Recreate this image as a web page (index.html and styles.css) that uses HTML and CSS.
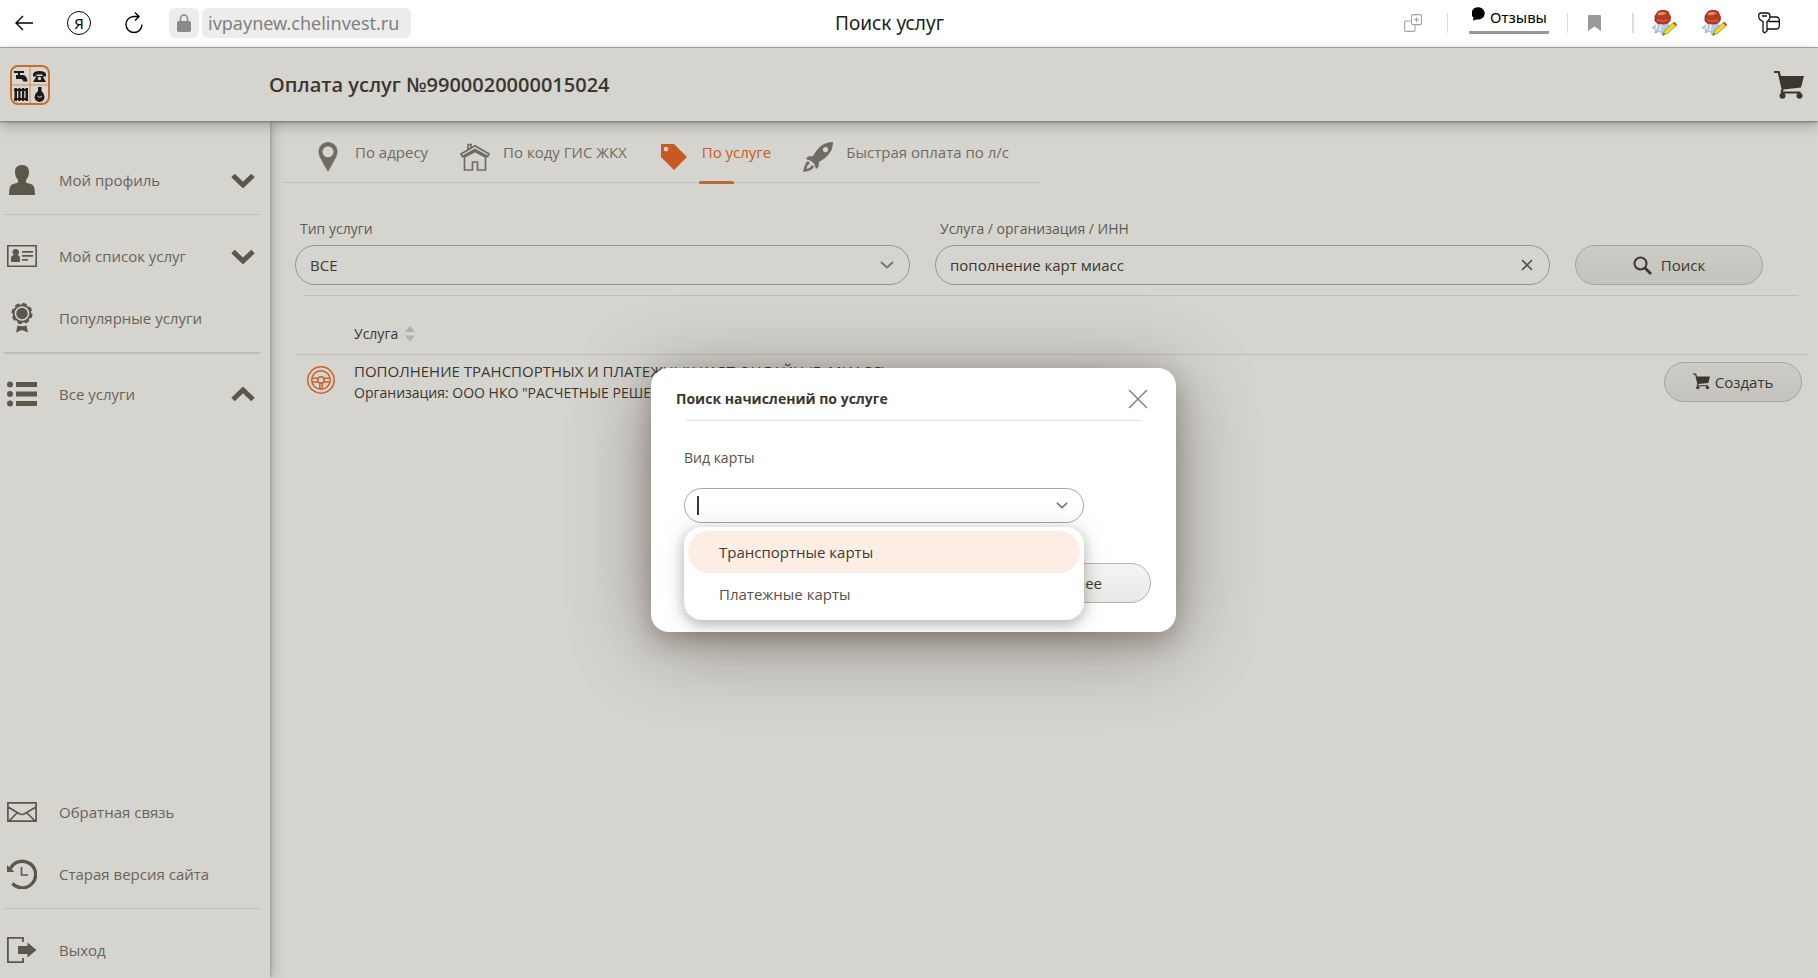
FILE: index.html
```html
<!DOCTYPE html>
<html lang="ru">
<head>
<meta charset="utf-8">
<title>Поиск услуг</title>
<link rel="stylesheet" href="styles.css">
</head>
<body>
<svg class="defs" aria-hidden="true">
  <symbol id="cart" viewBox="0 0 30 28"><path d="M0 0H5.500L7 5H30L27 16.500L9.500 18.500L9 20.500H26.500V22.500H7.500L6.500 20.500L7.500 18L3.800 2H0Z"/><circle cx="8.500" cy="24.800" r="3"/><circle cx="25.500" cy="24.800" r="3"/></symbol>
  <symbol id="chev" viewBox="0 0 24 15"><path d="M2 2.500L12 12L22 2.500" fill="none" stroke="currentColor" stroke-width="5"/></symbol>
  <symbol id="thin-chev" viewBox="0 0 14 8"><path d="M1 1L7 6.500L13 1" fill="none" stroke="currentColor" stroke-width="1.800"/></symbol>
  <symbol id="seal" viewBox="0 0 25 26">
    <path d="M6 13L0 18L4 19L3 23L8 21L11 26L13 20L19 18L15 12Z" fill="#b9cbe0" stroke="#8fa3bd" stroke-width=".7"/>
    <path d="M5 14L4 19M9 14L8 21" stroke="#eef4fb" stroke-width="1.500"/>
    <path d="M6 1.500Q11 -1 16 1.500L18.500 7L18 11L15 13.500L11 14L6 13.500L3 11L3 6Z" fill="#b83a22" stroke="#8f2312" stroke-width=".8"/>
    <path d="M6 3Q10 1 15 3Q11 6 6 5Z" fill="#e58a6e"/><path d="M5 10Q11 12.500 16 10" fill="none" stroke="#d9745a" stroke-width="1"/>
    <path d="M11 25L12.500 20.500L21.500 12.500L24.500 15.500L15.500 23.500Z" fill="#e8d631" stroke="#9a8b1c" stroke-width=".7"/>
    <path d="M20.800 13L22.500 11.800L25 14.500L23.700 16Z" fill="#d8402c"/><path d="M11 25L11.700 23L13 24.300Z" fill="#333"/>
  </symbol>
</svg>

<div class="browser">
  <div class="browser-left">
    <button class="ico-btn" aria-label="Назад"><svg width="18" height="16" viewBox="0 0 18 16" class="line"><path d="M18 8H1M8 1L1 8L8 15"/></svg></button>
    <button class="ico-btn ya" aria-label="Яндекс">Я</button>
    <button class="ico-btn" aria-label="Обновить"><svg width="18" height="22" viewBox="0 0 18 22" class="line"><path d="M17 12.500A8 8 0 1 1 9 4.500H14M10 .5L14 4.500L10 8.500"/></svg></button>
    <div class="address">
      <span class="lock"><svg width="14" height="18" viewBox="0 0 14 18"><path d="M3.500 8V4.500A3.500 3.500 0 0 1 10.500 4.500V8" fill="none" stroke="#8a8a8a" stroke-width="1.600"/><rect y="7" width="14" height="11" rx="2" fill="#8a8a8a"/></svg></span>
      <span class="url">ivpaynew.chelinvest.ru</span>
    </div>
  </div>
  <div class="page-title">Поиск услуг</div>
  <div class="browser-right">
    <svg width="18" height="18" viewBox="0 0 18 18" fill="none" stroke="#a3a3a3" stroke-width="1.100"><rect x="7.500" y=".6" width="10" height="10" rx="1.500"/><path d="M12.500 3.200V8M10.100 5.600H14.900M7.500 7H2Q.6 7 .6 8.500V16Q.6 17.400 2 17.400H9.500Q11 17.400 11 16V10.600"/></svg>
    <span class="sep sep-a"></span>
    <a class="reviews" href="#"><svg width="14" height="14" viewBox="0 0 14 14"><path d="M7 .3A6.600 6 0 1 1 5 12.400L1 13.500L1.500 10.500A6.600 6 0 0 1 7 .3Z"/></svg>Отзывы</a>
    <span class="sep sep-b"></span>
    <svg width="13" height="16" viewBox="0 0 13 16" fill="#999"><path d="M1 0H12Q13 0 13 1V16L6.500 11.500L0 16V1Q0 0 1 0Z"/></svg>
    <span class="sep sep-c"></span>
    <svg class="seal" width="25" height="26"><use href="#seal"/></svg>
    <svg class="seal" width="25" height="26"><use href="#seal"/></svg>
    <svg width="22" height="22" viewBox="0 0 22 22" fill="none" stroke="#111" stroke-width="1.300"><path d="M3 1H9Q12 1 12 4Q12 8 9 9.500V19L6.500 21L5 19.500V9.500Q.7 8 .7 4Q.7 1 3 1ZM4 4H9M12.500 5H18Q21.300 5 21.300 8V14Q21.300 17 18 17H9.500M10.500 9.500H21"/></svg>
  </div>
</div>

<header class="header">
  <svg class="logo" width="40" height="40" viewBox="0 0 40 40">
    <rect x="1" y="1" width="38" height="38" rx="7" fill="#d9d6cf" stroke="#c66f2a" stroke-width="2"/>
    <path d="M20 2V38M2 20H38" stroke="#cd8d5c" stroke-width="1"/>
    <g fill="#1d1b17"><path d="M4 6H14V8H10V10H13Q17 10.500 17.500 16.500H13.500Q13 14 11 14H6V10H8V8H4Z"/>
    <path d="M23 9Q24 6 29.500 6Q35 6 36 9V11.500H32.500V9.500H26.500V11.500H23ZM26.500 11H32.500L36 17H23Z"/><circle cx="29.500" cy="13.500" r="1.700" fill="#d9d6cf"/>
    <path d="M4 24H18V26H4ZM4 33H18V35H4Z"/><path d="M4.500 23H7V36H4.500ZM8.300 23H10.500V36H8.300ZM12 23H14.200V36H12ZM15.500 23H18V36H15.500Z"/>
    <path d="M28 22H31.500V26Q34.500 29 34.500 32A5 5 0 0 1 24.500 32Q24.500 29 28 26Z"/></g><path d="M27.500 31Q30 34 32 31" stroke="#d9d6cf" fill="none"/>
  </svg>
  <h1>Оплата услуг №9900020000015024</h1>
  <button class="plain cart-btn" aria-label="Корзина"><svg width="30" height="28"><use href="#cart"/></svg></button>
</header>

<div class="body">
  <nav class="sidebar">
    <a href="#" class="item"><svg width="30" height="30" viewBox="0 0 30 30"><path d="M15 0C20 0 22 3 22 7C22 11 20.500 13 19 15V17.500L25 19.500Q28 21 28 30H2Q2 21 5 19.500L11 17.500V15C9.500 13 8 11 8 7C8 3 10 0 15 0Z"/></svg><span>Мой профиль</span><svg class="arrow" width="24" height="15"><use href="#chev"/></svg></a>
    <hr>
    <a href="#" class="item"><svg width="30" height="30" viewBox="0 0 30 30"><path d="M.8 4.800H29.200V25.200H.8Z" fill="none" stroke="currentColor" stroke-width="1.600"/><path d="M4 21V17Q4 14.500 7 14A3.300 3.300 0 1 1 10.500 14Q13 14.500 13 17V21ZM15 10H26V11.800H15ZM15 14H26V15.800H15ZM15 18H21V19.800H15Z"/></svg><span>Мой список услуг</span><svg class="arrow" width="24" height="15"><use href="#chev"/></svg></a>
    <a href="#" class="item"><svg width="30" height="30" viewBox="0 0 30 30"><circle cx="15" cy="10.500" r="8.300" fill="none" stroke="currentColor" stroke-width="2"/><circle cx="15" cy="10.500" r="9.600" fill="none" stroke="currentColor" stroke-width="2" stroke-dasharray="4.500 3.040"/><circle cx="15" cy="10.500" r="5.700"/><path d="M10.500 22.500Q15 24 19.500 22.500L21 29.500L15 27L9 29.500Z"/></svg><span>Популярные услуги</span></a>
    <hr class="thick">
    <a href="#" class="item"><svg width="30" height="30" viewBox="0 0 30 30"><circle cx="3" cy="5.500" r="3"/><circle cx="3" cy="15" r="3"/><circle cx="3" cy="24.500" r="3"/><path d="M9 3H30V8H9ZM9 12.500H30V17.500H9ZM9 22H30V27H9Z"/></svg><span>Все услуги</span><svg class="arrow up" width="24" height="15"><use href="#chev"/></svg></a>
    <div class="bottom">
      <a href="#" class="item"><svg width="30" height="30" viewBox="0 0 30 30" ><path d="M.9 5.900H29.100V24.100H.9ZM1 10L12 16.500Q15 18.500 18 16.500L29 10M2 24L10.500 15.500M28 24L19.500 15.500" fill="none" stroke="currentColor" stroke-width="1.700"/></svg><span>Обратная связь</span></a>
      <a href="#" class="item"><svg width="30" height="30" viewBox="0 0 30 30"><path d="M3.500 9.500A13.300 13.300 0 1 1 5.500 24.500" fill="none" stroke="currentColor" stroke-width="3.400"/><path d="M0 6L7 12.500V13H0Z"/><path d="M14.500 8V16H21" fill="none" stroke="currentColor" stroke-width="1.600"/></svg><span>Старая версия сайта</span></a>
      <hr>
      <a href="#" class="item"><svg width="30" height="30" viewBox="0 0 30 30"><path d="M16 7V2.900H.9V27.100H16V23" fill="none" stroke="currentColor" stroke-width="1.800"/><path d="M11 11H20.500V7.500L29.500 15L20.500 22.500V19H11Z"/></svg><span>Выход</span></a>
    </div>
  </nav>

  <main class="main">
    <nav class="tabs">
      <a href="#" class="tab"><svg width="30" height="30" viewBox="0 0 30 30"><path fill-rule="evenodd" d="M15 0A9.500 9.500 0 0 1 24.500 9.500C24.500 15 19 22 15 30C11 22 5.500 15 5.500 9.500A9.500 9.500 0 0 1 15 0ZM15 4.300A5.500 5.500 0 1 0 15 15.300A5.500 5.500 0 0 0 15 4.300Z"/></svg><span>По адресу</span></a>
      <a href="#" class="tab"><svg width="30" height="30" viewBox="0 0 30 30" fill="none" stroke="currentColor" stroke-width="1.700"><path d="M1 12L15 3.800L29 12L27.500 14.500L15 7.500L2.500 14.500ZM4.500 15V28H12.500V20H17.500V28H25.500V15L15 9.500ZM8 7.500V2.500H11V5.500"/></svg><span>По коду ГИС ЖКХ</span></a>
      <a href="#" class="tab active"><svg width="30" height="30" viewBox="0 0 30 30"><path fill-rule="evenodd" d="M2 2H15L28 15L15 28L2 15ZM7 4.800A2.300 2.300 0 1 0 7 9.400A2.300 2.300 0 0 0 7 4.800Z"/></svg><span>По услуге</span></a>
      <a href="#" class="tab"><svg width="30" height="30" viewBox="0 0 30 30"><path fill-rule="evenodd" d="M30 0Q30 7 26 12Q23 16 16 20L15.500 25L13 27L11 21.500L8 19L3 17L5 14.500L10 14Q14 7 18 4Q23 0 30 0ZM22.500 5A2.600 2.600 0 1 0 22.500 10.200A2.600 2.600 0 0 0 22.500 5Z"/><path d="M5 19Q2 20 0 30Q9 29 11 25L9 23Q7.500 26 3.500 27Q4 23 7 21Z"/></svg><span>Быстрая оплата по л/с</span></a>
    </nav>

    <form class="filters">
      <div class="field">
        <label for="type">Тип услуги</label>
        <div class="control"><select id="type"><option>ВСЕ</option></select><svg class="caret" width="14" height="8"><use href="#thin-chev"/></svg></div>
      </div>
      <div class="field">
        <label for="query">Услуга / организация / ИНН</label>
        <div class="control"><input id="query" type="text" value="пополнение карт миасс"><button type="button" class="plain clear" aria-label="Очистить"><svg width="12" height="12" viewBox="0 0 12 12"><path d="M1 1L11 11M11 1L1 11" stroke="#55524b" stroke-width="1.600"/></svg></button></div>
      </div>
      <button type="button" class="pill"><svg width="19" height="19" viewBox="0 0 19 19" fill="none" stroke="currentColor"><circle cx="7.500" cy="7.500" r="6" stroke-width="2"/><path d="M12 12L18 18" stroke-width="2.800"/></svg>Поиск</button>
    </form>

    <div class="results-wrap">
    <table class="results">
      <thead><tr><th></th><th><div class="th">Услуга<svg width="10" height="16" viewBox="0 0 10 16" fill="#b0afaa"><path d="M5 0L10 6H0ZM0 9.500H10L5 15.500Z"/></svg></div></th><th></th></tr></thead>
      <tbody><tr>
        <td class="c-icon"><svg width="28" height="28" viewBox="0 0 28 28" fill="none" stroke="#c9622c" stroke-width="1.500"><circle cx="14" cy="14" r="13.200"/><circle cx="14" cy="14" r="9.300"/><circle cx="14" cy="14" r="3.200"/><path d="M5 12.300H11M17 12.300H23M5.500 16H11M17 16H22.500M12.800 17V23M15.200 17V23"/></svg></td>
        <td class="c-name"><div class="name">ПОПОЛНЕНИЕ ТРАНСПОРТНЫХ И ПЛАТЕЖНЫХ КАРТ ОНЛАЙН (Г. МИАСС)</div><div class="org">Организация: ООО НКО "РАСЧЕТНЫЕ РЕШЕНИЯ"</div></td>
        <td class="c-act"><button class="pill create"><svg width="17" height="17"><use href="#cart"/></svg>Создать</button></td>
      </tr></tbody>
    </table>
    </div>
  </main>
</div>

<div class="overlay">
  <section class="modal" role="dialog" aria-labelledby="dlg">
    <div class="modal-head"><h2 id="dlg">Поиск начислений по услуге</h2><button class="plain" aria-label="Закрыть"><svg width="20" height="20" viewBox="0 0 20 20"><path d="M1 1L19 19M19 1L1 19" stroke="#85827b" stroke-width="1.500"/></svg></button></div>
    <div class="modal-body">
      <label for="kind">Вид карты</label>
      <div class="combo">
        <input id="kind" type="text" role="combobox" aria-expanded="true" aria-controls="kinds">
        <span class="cursor"></span>
        <svg class="caret" width="12" height="7"><use href="#thin-chev"/></svg>
        <ul class="options" id="kinds" role="listbox">
          <li role="option" aria-selected="true" class="current">Транспортные карты</li>
          <li role="option">Платежные карты</li>
        </ul>
      </div>
    </div>
    <div class="modal-foot"><button class="pill light">Далее</button></div>
  </section>
</div>
</body>
</html>
```

FILE: styles.css
```css
* { box-sizing: border-box; }

body {
  margin: 0;
  height: 100vh;
  display: flex;
  flex-direction: column;
  overflow: hidden;
  background: #d5d4cf;
  color: #3b372e;
  fill: currentColor;
  font: 15px/20px "Open Sans", "Noto Sans", sans-serif;
}

button, input, select { font: inherit; color: inherit; }
a { color: inherit; text-decoration: none; }
h1, h2 { margin: 0; }
svg { display: block; flex: none; }
.defs { position: absolute; width: 0; height: 0; }
.plain { border: 0; background: none; padding: 0; cursor: pointer; }

/* browser bar */
.browser {
  display: grid;
  grid-template-columns: 1fr auto 1fr;
  align-items: center;
  height: 48px;
  flex: none;
  padding: 0 38px 2px 15px;
  background: #fff;
  border-bottom: 1px solid #adaca9;
  font-family: "Noto Sans", sans-serif;
  font-size: 19px;
  color: #222;
}
.browser-left, .browser-right, .address { display: flex; align-items: center; }
.browser-left { gap: 34px; }
.browser-right { justify-content: flex-end; }
.page-title { margin-right: 16px; }
.ico-btn { border: 0; background: none; padding: 0; }
.line { fill: none; stroke: #000; stroke-width: 1.4; }
.ya { width: 24px; height: 24px; border: 1px solid #000; border-radius: 50%; font-size: 15px; line-height: 20px; color: #000; }
.address { gap: 3px; margin-left: -8px; }
.lock, .url { background: #ececec; border-radius: 6px; height: 30px; }
.lock { width: 30px; display: grid; place-items: center; }
.url { padding: 0 12px 0 6px; font-size: 18px; line-height: 30px; color: #808080; }
.sep { width: 1px; height: 20px; background: #ddd; }
.sep-a { margin: 0 21px 0 25px; }
.sep-b { margin: 0 20px 0 18px; }
.sep-c { margin: 0 18px 0 31px; width: 2px; }
.reviews {
  display: flex;
  gap: 4px;
  margin-bottom: 4px;
  padding: 0 2px 4px 3px;
  border-bottom: 3px solid #999;
  border-radius: 1px;
  font-size: 15px;
  line-height: 20px;
  color: #000;
}
.seal { margin-right: 25px; }
.seal + .seal { margin-right: 31px; }

/* header */
.header {
  position: relative;
  z-index: 2;
  display: flex;
  align-items: center;
  flex: none;
  height: 73px;
  padding: 0 14px 0 10px;
  background: #d5d4cf;
  box-shadow: 0 1px 2px rgba(60, 56, 46, .5), 0 4px 12px rgba(60, 56, 46, .35);
}
.header h1 { margin-left: 219px; font-size: 20px; line-height: 28px; font-weight: 600; }
.cart-btn { margin-left: auto; }

.body { flex: 1; display: flex; min-height: 0; }

/* sidebar */
.sidebar {
  width: 270px;
  flex: none;
  display: flex;
  flex-direction: column;
  padding: 32px 10px 1px 4px;
  box-shadow: 1px 0 2px rgba(60, 56, 46, .2), 2px 0 12px rgba(60, 56, 46, .3);
  color: #5c574b;
}
.sidebar hr { height: 1px; border: 0; background: #bebdb8; margin: 7px 0 14px; }
.sidebar hr.thick { height: 2px; margin-bottom: 13px; }
.item { display: flex; align-items: center; height: 54px; padding: 0 5px 0 3px; }
.item span { margin-left: 22px; color: #68645a; }
.item + .item { margin-top: 8px; }
.arrow { margin-left: auto; }
.up { transform: rotate(180deg); }
.bottom { margin-top: auto; }

/* main */
.main { flex: 1; min-width: 0; padding: 0 10px 0 13px; }
.tabs {
  display: flex;
  gap: 32px;
  width: 758px;
  height: 62px;
  padding: 21px 0 0 30px;
  border-bottom: 1px solid #bebdb8;
  color: #6f6c63;
}
.tab { position: relative; display: flex; gap: 12px; height: 41px; white-space: nowrap; }
.tab + .tab { gap: 13px; }
.active { color: #c75a22; }
.active::after {
  content: "";
  position: absolute;
  left: 40px;
  bottom: -1px;
  width: 35px;
  height: 3px;
  border-radius: 2px 2px 0 0;
  background: #b96a3d;
}
.filters {
  display: grid;
  grid-template-columns: 1fr 1fr 188px;
  gap: 10px 25px;
  align-items: end;
  padding: 36px 45px 0 12px;
}
.filters::after {
  content: "";
  grid-column: 1 / -1;
  height: 1px;
  margin: 0 -35px 0 10px;
  background: #bebdb8;
}
.field label { display: block; margin: 0 0 6px 5px; font-size: 14px; line-height: 20px; color: #5f5b52; }
.control { position: relative; }
.control select, .control input {
  display: block;
  width: 100%;
  height: 40px;
  padding: 0 14px;
  border: 1px solid #98958d;
  border-radius: 20px;
  background: transparent;
  appearance: none;
  outline: 0;
}
.caret { position: absolute; right: 16px; top: 50%; margin-top: -4px; color: #77746b; }
.clear { position: absolute; right: 17px; top: 14px; }
.pill {
  display: flex;
  align-items: center;
  justify-content: center;
  gap: 9px;
  height: 40px;
  border: 1px solid #a5a39c;
  border-radius: 20px;
  background: linear-gradient(#cccbc6, #c4c3bd);
  cursor: pointer;
}
.results-wrap { padding: 18px 0 0 12px; }
.results { width: 100%; border-collapse: collapse; }
.results th { height: 40px; padding: 0; font-size: 14px; font-weight: 400; border-bottom: 1px solid #bebdb8; }
.th { display: flex; align-items: center; gap: 7px; }
.results td { padding: 7px 0; vertical-align: top; }
.results .c-icon { width: 59px; padding: 11px 0 0 12px; }
.results .c-name { padding: 6px 0; }
.name { line-height: 20px; }
.org { font-size: 14px; line-height: 24px; }
.c-act { width: 144px; }
.create { width: 138px; gap: 5px; }

/* dialog */
.overlay {
  position: absolute;
  inset: 0;
  z-index: 5;
  display: flex;
  justify-content: center;
  align-items: flex-start;
  padding: 368px 0 0 9px;
}
.modal {
  width: 525px;
  padding: 19px 25px 29px;
  border-radius: 18px;
  background: #fff;
  box-shadow: 0 12px 80px rgba(60, 50, 40, .45), 0 8px 24px rgba(60, 50, 40, .3);
}
.modal-head { display: flex; align-items: center; justify-content: space-between; height: 24px; padding-right: 3px; }
.modal-head h2 { font-size: 14px; line-height: 24px; font-weight: 700; }
.modal-body { margin: 9px 10px 0; padding-top: 27px; border-top: 1px solid #e4e3e0; }
.modal-body label { display: block; margin-left: -2px; font-size: 14px; color: #55524a; }
.combo { position: relative; width: 400px; margin: 20px 0 0 -2px; }
.combo input {
  display: block;
  width: 100%;
  height: 35px;
  padding: 0 14px;
  border: 1px solid #a9a7a1;
  border-radius: 18px;
  background: #fff;
  outline: 0;
}
.cursor { position: absolute; left: 13px; top: 8px; width: 2px; height: 19px; background: #3b372e; }
.options {
  position: absolute;
  left: 0;
  right: 0;
  top: 39px;
  margin: 0;
  padding: 4px 4px 5px;
  list-style: none;
  border-radius: 18px;
  background: #fff;
  box-shadow: 0 4px 14px rgba(60, 56, 46, .35), 0 0 30px rgba(60, 56, 46, .1);
}
.options li { height: 42px; padding: 0 31px; border-radius: 21px; line-height: 42px; color: #55524a; }
.options .current { background: #fceee5; color: #3f3b33; }
.modal-foot { display: flex; justify-content: flex-end; margin-top: 40px; }
.light { width: 142px; background: linear-gradient(#f6f5f4, #e9e8e6); border-color: #b5b3ae; }
```
